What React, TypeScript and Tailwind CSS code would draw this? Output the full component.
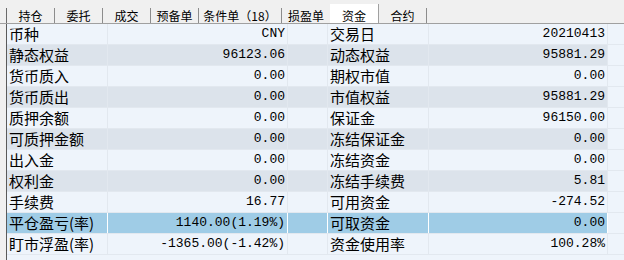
import React from 'react';

const tabs = [
  { name: '持仓', w: 'w-[48px]' },
  { name: '委托', w: 'w-[48px]' },
  { name: '成交', w: 'w-[48px]' },
  { name: '预备单', w: 'w-[48px]' },
  { name: '条件单（18）', w: 'w-[83px]' },
  { name: '损盈单', w: 'w-[48px]', noBorder: true },
  { name: '资金', w: 'w-[49px]', active: true },
  { name: '合约', w: 'w-[48px]' },
];

const rows: [string, string, string, string][] = [
  ['币种', 'CNY', '交易日', '20210413'],
  ['静态权益', '96123.06', '动态权益', '95881.29'],
  ['货币质入', '0.00', '期权市值', '0.00'],
  ['货币质出', '0.00', '市值权益', '95881.29'],
  ['质押余额', '0.00', '保证金', '96150.00'],
  ['可质押金额', '0.00', '冻结保证金', '0.00'],
  ['出入金', '0.00', '冻结资金', '0.00'],
  ['权利金', '0.00', '冻结手续费', '5.81'],
  ['手续费', '16.77', '可用资金', '-274.52'],
  ['平仓盈亏(率)', '1140.00(1.19%)', '可取资金', '0.00'],
  ['盯市浮盈(率)', '-1365.00(-1.42%)', '资金使用率', '100.28%'],
];

const cjk = "font-['Noto_Sans_CJK_SC',sans-serif]";
const mono = "font-['Liberation_Mono','Noto_Sans_CJK_SC',monospace]";

export default function App() {
  return (
    <div className="w-[624px] h-[260px] overflow-hidden bg-[#f0f0f0] text-black">
      {/* tab strip */}
      <div className="flex items-end h-[24px] pl-[6px] border-b border-[#a0a0a0]">
        <div className="w-px h-[15px] bg-[#6a6a6a]" />
        {tabs.map(t => (
          <div
            key={t.name}
            className={
              t.active
                ? `${t.w} h-[19px] pt-[4px] bg-white border-r border-[#a0a0a0] text-center text-[12px] leading-[15px] ${cjk}`
                : `${t.w} h-[15px] ${t.noBorder ? '' : 'border-r border-[#8c8c8c]'} text-center text-[12px] leading-[15px] ${cjk}`
            }
          >
            {t.name}
          </div>
        ))}
      </div>

      {/* fund table */}
      <div className="ml-[6px] h-[236px] border-l border-[#5a5a5a] bg-[#eef4fb]">
        {rows.map((r, i) => {
          const hl = i === 9;
          const bg = hl ? 'bg-[#9fcce6]' : i % 2 === 1 ? 'bg-[#dce3eb]' : 'bg-[#eef4fb]';
          const line = hl ? 'border-white' : 'border-[#e2e8ef]';
          return (
            <div key={i} className="flex h-[21px] border-b border-[#e2e8ef]">
              <div className={`flex ${bg}`}>
                <div className={`w-[101px] border-r ${line} pl-[2px] text-[15px] leading-[20px] whitespace-nowrap ${cjk}`}>{r[0]}</div>
                <div className={`w-[180px] border-r ${line} pr-[2px] text-right text-[13px] leading-[20px] whitespace-nowrap ${mono}`}>{r[1]}</div>
                <div className={`w-[40px] border-r ${line}`} />
                <div className={`w-[101px] border-r ${line} pl-[2px] text-[15px] leading-[20px] whitespace-nowrap ${cjk}`}>{r[2]}</div>
                <div className={`w-[179px] border-r ${line} pr-[2px] text-right text-[13px] leading-[20px] whitespace-nowrap ${mono}`}>{r[3]}</div>
              </div>
              <div className="flex-1 bg-[#eef4fb]" />
            </div>
          );
        })}
      </div>
    </div>
  );
}
